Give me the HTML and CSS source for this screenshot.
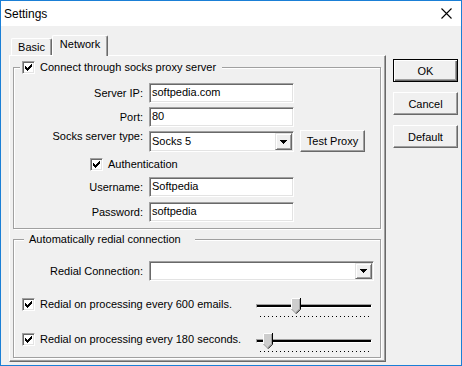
FILE: index.html
```html
<!DOCTYPE html>
<html lang="en">
<head>
    <meta charset="UTF-8">
    <title>Settings</title>
    <link rel="stylesheet" href="styles.css">
</head>
<body>
    <div class="window">
        <div class="titlebar">
            <span class="title">Settings</span>
            <svg class="close" width="11" height="11" viewBox="0 0 11 11">
                <path d="M0.5 0.5L10.5 10.5M10.5 0.5L0.5 10.5" stroke="#000" stroke-width="1.1" fill="none"/>
            </svg>
        </div>

        <div class="client">
            <div class="tabs">
                <div class="tab-strip">
                    <div class="tab">Basic</div>
                    <div class="tab active">Network</div>
                </div>

                <div class="tab-panel">
                    <!-- Proxy group -->
                    <fieldset class="group proxy-group">
                        <legend class="check-label">
                            <span class="check"><svg viewBox="1 1 11 11"><path d="M9 3h1v1h-1zM8 4h2v1h-2zM3 5h1v1h-1zM7 5h3v1h-3zM3 6h2v1h-2zM6 6h3v1h-3zM3 7h5v1h-5zM4 8h3v1h-3zM5 9h1v1h-1z"/></svg></span>
                            Connect through socks proxy server
                        </legend>

                        <div class="row">
                            <label class="field-label">Server IP:</label>
                            <div class="edit">softpedia.com</div>
                        </div>
                        <div class="row row-gap">
                            <label class="field-label">Port:</label>
                            <div class="edit">80</div>
                        </div>
                        <div class="row row-combo">
                            <label class="field-label">Socks server type:</label>
                            <div class="combo">
                                <span class="combo-text">Socks 5</span>
                                <span class="drop"><svg width="7" height="4" viewBox="0 0 7 4"><path d="M0 0h7v1h-7zM1 1h5v1h-5zM2 2h3v1h-3zM3 3h1v1h-1z"/></svg></span>
                            </div>
                            <div class="button test-button">Test Proxy</div>
                        </div>
                        <div class="row row-auth">
                            <span class="check-label">
                                <span class="check"><svg viewBox="1 1 11 11"><path d="M9 3h1v1h-1zM8 4h2v1h-2zM3 5h1v1h-1zM7 5h3v1h-3zM3 6h2v1h-2zM6 6h3v1h-3zM3 7h5v1h-5zM4 8h3v1h-3zM5 9h1v1h-1z"/></svg></span>
                                Authentication
                            </span>
                        </div>
                        <div class="row row-user">
                            <label class="field-label">Username:</label>
                            <div class="edit">Softpedia</div>
                        </div>
                        <div class="row row-pass">
                            <label class="field-label">Password:</label>
                            <div class="edit">softpedia</div>
                        </div>
                    </fieldset>

                    <!-- Redial group -->
                    <fieldset class="group redial-group">
                        <legend class="plain-legend">Automatically redial connection</legend>

                        <div class="row">
                            <label class="field-label">Redial Connection:</label>
                            <div class="combo combo-wide">
                                <span class="combo-text"></span>
                                <span class="drop"><svg width="7" height="4" viewBox="0 0 7 4"><path d="M0 0h7v1h-7zM1 1h5v1h-5zM2 2h3v1h-3zM3 3h1v1h-1z"/></svg></span>
                            </div>
                        </div>

                        <div class="slider-row first">
                            <span class="check-label">
                                <span class="check"><svg viewBox="1 1 11 11"><path d="M9 3h1v1h-1zM8 4h2v1h-2zM3 5h1v1h-1zM7 5h3v1h-3zM3 6h2v1h-2zM6 6h3v1h-3zM3 7h5v1h-5zM4 8h3v1h-3zM5 9h1v1h-1z"/></svg></span>
                                Redial on processing every 600 emails.
                            </span>
                            <div class="slider">
                                <div class="track"></div>
                                <div class="ticks"></div>
                                <svg class="thumb" style="left: 35px" width="10" height="16" viewBox="0 0 10 16">
                                    <path d="M0 0H10V11L5 16L0 11Z" fill="#cdcdcd"/>
                                    <path d="M0.5 11V0.5H9" stroke="#fff" fill="none"/>
                                    <path d="M9.5 0V11.2L5 15.7" stroke="#000" fill="none"/>
                                    <path d="M8.5 1V10.8L5 14.3" stroke="#a0a0a0" fill="none"/>
                                    <path d="M0.5 11L4.5 15" stroke="#a0a0a0" fill="none"/>
                                </svg>
                            </div>
                        </div>

                        <div class="slider-row second">
                            <span class="check-label">
                                <span class="check"><svg viewBox="1 1 11 11"><path d="M9 3h1v1h-1zM8 4h2v1h-2zM3 5h1v1h-1zM7 5h3v1h-3zM3 6h2v1h-2zM6 6h3v1h-3zM3 7h5v1h-5zM4 8h3v1h-3zM5 9h1v1h-1z"/></svg></span>
                                Redial on processing every 180 seconds.
                            </span>
                            <div class="slider">
                                <div class="track"></div>
                                <div class="ticks"></div>
                                <svg class="thumb" style="left: 7px" width="10" height="16" viewBox="0 0 10 16">
                                    <path d="M0 0H10V11L5 16L0 11Z" fill="#cdcdcd"/>
                                    <path d="M0.5 11V0.5H9" stroke="#fff" fill="none"/>
                                    <path d="M9.5 0V11.2L5 15.7" stroke="#000" fill="none"/>
                                    <path d="M8.5 1V10.8L5 14.3" stroke="#a0a0a0" fill="none"/>
                                    <path d="M0.5 11L4.5 15" stroke="#a0a0a0" fill="none"/>
                                </svg>
                            </div>
                        </div>
                    </fieldset>
                </div>
            </div>

            <div class="side-buttons">
                <div class="button default-button">OK</div>
                <div class="button">Cancel</div>
                <div class="button">Default</div>
            </div>
        </div>
    </div>
</body>
</html>
```

FILE: styles.css
```css
* {
    margin: 0;
    padding: 0;
    box-sizing: border-box;
}

body {
    font-family: 'Liberation Sans', Arial, sans-serif;
    font-size: 11px;
    color: #000000;
    background: #ffffff;
}

.window {
    width: 462px;
    height: 366px;
    border: 1px solid #1a7fd6;
    display: flex;
    flex-direction: column;
}

.titlebar {
    height: 25px;
    background: #ffffff;
    display: flex;
    align-items: center;
    padding-left: 3px;
    padding-right: 9px;
    font-size: 12px;
}

.title {
    flex: 1;
}

.close {
    display: block;
}

.client {
    flex: 1;
    background: #f0f0f0;
    display: flex;
    padding: 9px 0 0 8px;
}

/* Tab control */
.tabs {
    width: 377px;
}

.tab-strip {
    display: flex;
    align-items: flex-end;
    height: 20px;
    padding-left: 2px;
}

.tab {
    width: 41px;
    height: 17px;
    display: flex;
    align-items: center;
    justify-content: center;
    border-top: 1px solid #ffffff;
    border-left: 1px solid #ffffff;
    border-right: 1px solid #696969;
    box-shadow: inset -1px 0 0 #a0a0a0;
    border-radius: 2px 2px 0 0;
    background: #f0f0f0;
}

.tab.active {
    width: 56px;
    height: 21px;
    margin-bottom: -1px;
    padding-bottom: 4px;
    position: relative;
    z-index: 1;
}

.tab-panel {
    height: 307px;
    border-top: 1px solid #ffffff;
    border-left: 1px solid #ffffff;
    border-right: 1px solid #696969;
    border-bottom: 1px solid #696969;
    box-shadow: inset -1px -1px 0 #a0a0a0;
    padding: 0 4px 0 3px;
}

/* Group boxes */
.group {
    border: 1px solid #a0a0a0;
    box-shadow: 1px 1px 0 #ffffff, inset 1px 1px 0 #ffffff;
    min-inline-size: 0;
}

.proxy-group {
    margin-top: 5px;
    padding: 9px 0 6px 0;
}

.redial-group {
    margin-top: 4px;
    padding: 15px 0 5px 0;
}

.group legend {
    background: #f0f0f0;
    height: 13px;
    line-height: 13px;
}

.proxy-group legend {
    margin-left: 6px;
    padding: 0 6px 0 2px;
}

.plain-legend {
    margin-left: 10px;
    padding: 0 14px 0 5px;
}

.check-label {
    display: flex;
    align-items: center;
    gap: 5px;
    height: 13px;
    line-height: 13px;
    white-space: nowrap;
}

.check {
    width: 13px;
    height: 13px;
    background: #ffffff;
    border-top: 1px solid #a0a0a0;
    border-left: 1px solid #a0a0a0;
    border-right: 1px solid #ffffff;
    border-bottom: 1px solid #ffffff;
    box-shadow: inset 1px 1px 0 #696969, inset -1px -1px 0 #e3e3e3;
    flex-shrink: 0;
}

.check svg {
    display: block;
    width: 11px;
    height: 11px;
    shape-rendering: crispEdges;
}

/* Form rows */
.row {
    display: flex;
    align-items: center;
}

.row-gap {
    margin-top: 4px;
}

.row-combo {
    margin-top: 3px;
    align-items: flex-start;
}

.row-combo .combo {
    margin-top: 1px;
}

.row-auth {
    margin-top: 6px;
    padding-left: 76px;
}

.row-user {
    margin-top: 6px;
}

.row-pass {
    margin-top: 5px;
}

.field-label {
    width: 129px;
    margin-right: 6px;
    text-align: right;
    white-space: nowrap;
}

.edit {
    width: 145px;
    height: 20px;
    line-height: 16px;
    padding-left: 2px;
    background: #ffffff;
    border-top: 1px solid #a0a0a0;
    border-left: 1px solid #a0a0a0;
    border-right: 1px solid #ffffff;
    border-bottom: 1px solid #ffffff;
    box-shadow: inset 1px 1px 0 #696969, inset -1px -1px 0 #e3e3e3;
}

.combo {
    width: 145px;
    height: 21px;
    display: flex;
    padding: 1px;
    background: #ffffff;
    border-top: 1px solid #a0a0a0;
    border-left: 1px solid #a0a0a0;
    border-right: 1px solid #ffffff;
    border-bottom: 1px solid #ffffff;
    box-shadow: inset 1px 1px 0 #696969, inset -1px -1px 0 #e3e3e3;
}

.combo-wide {
    width: 225px;
    height: 20px;
}

.combo-text {
    flex: 1;
    padding-left: 1px;
    line-height: 17px;
}

.drop {
    width: 17px;
    background: #f0f0f0;
    border-top: 1px solid #e3e3e3;
    border-left: 1px solid #e3e3e3;
    border-right: 1px solid #696969;
    border-bottom: 1px solid #696969;
    box-shadow: inset 1px 1px 0 #ffffff, inset -1px -1px 0 #a0a0a0;
    display: flex;
    align-items: center;
    justify-content: center;
}

.drop svg {
    display: block;
    shape-rendering: crispEdges;
}

/* Buttons */
.button {
    width: 65px;
    height: 23px;
    display: flex;
    align-items: center;
    justify-content: center;
    background: #f0f0f0;
    border-top: 1px solid #ffffff;
    border-left: 1px solid #ffffff;
    border-right: 1px solid #696969;
    border-bottom: 1px solid #696969;
    box-shadow: inset -1px -1px 0 #a0a0a0;
}

.test-button {
    height: 22px;
    margin-left: 6px;
}

.default-button {
    border: 1px solid #000000;
    box-shadow: inset 1px 1px 0 #ffffff, inset -1px -1px 0 #696969, inset -2px -2px 0 #a0a0a0;
}

.side-buttons {
    margin-left: 7px;
    padding-top: 24px;
    display: flex;
    flex-direction: column;
    gap: 10px;
}

/* Trackbars */
.slider-row {
    display: flex;
    align-items: flex-start;
    padding-left: 8px;
}

.slider-row.first {
    margin-top: 17px;
}

.slider-row.second {
    margin-top: 16px;
}

.slider {
    position: relative;
    width: 116px;
    height: 19px;
    margin-left: auto;
    margin-right: 8px;
}

.track {
    margin-top: 6px;
    height: 4px;
    border-top: 1px solid #a0a0a0;
    border-left: 1px solid #a0a0a0;
    border-bottom: 1px solid #ffffff;
    border-right: 1px solid #ffffff;
    background: #000000;
}

.ticks {
    position: absolute;
    left: 4px;
    right: 3px;
    top: 18px;
    height: 1px;
    background: repeating-linear-gradient(90deg, #000000 0 1px, transparent 1px 4px);
}

.thumb {
    position: absolute;
    top: 0;
}
```
